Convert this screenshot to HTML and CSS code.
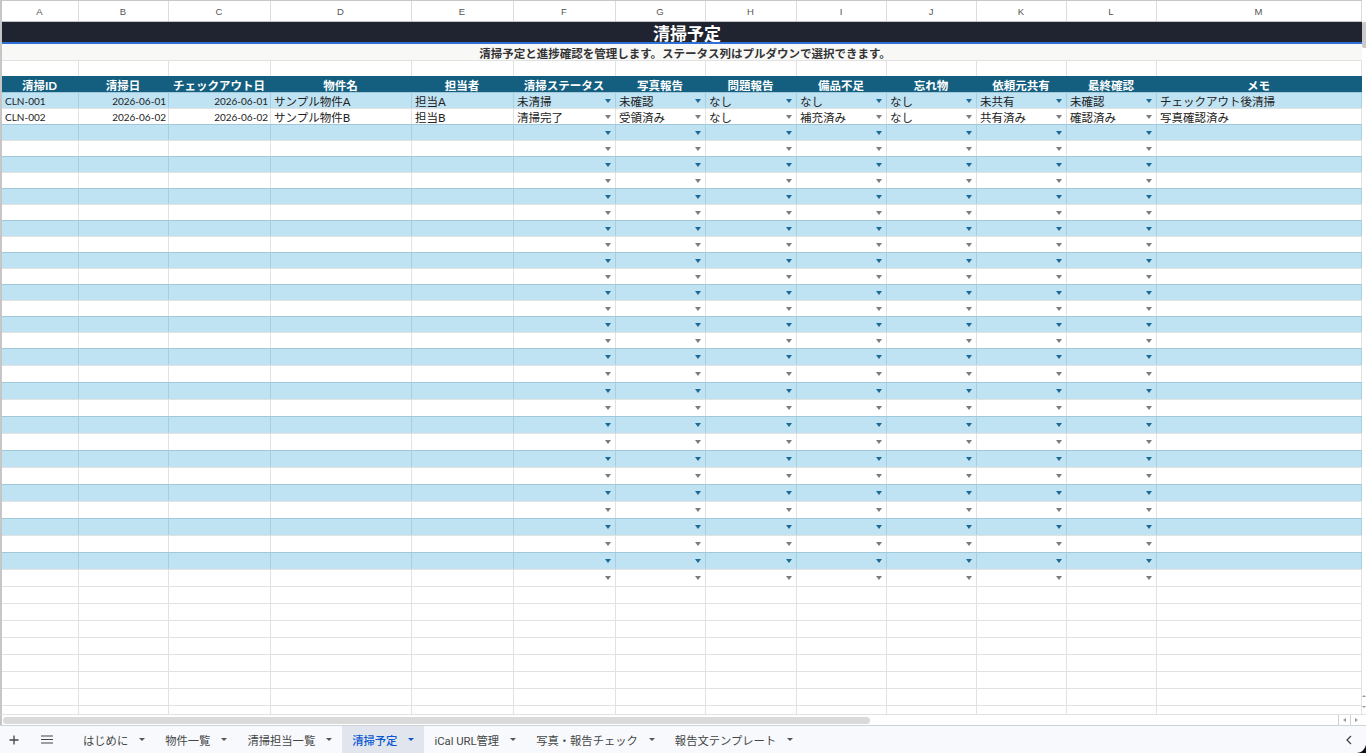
FILE: index.html
```html
<!DOCTYPE html>
<html>
<head>
	<meta charset="utf-8">
	<title>清掃予定</title>
	<link rel="stylesheet" href="styles.css">
</head>
<body>
	<div class="app">
		<!--シート本体-->
		<div class="sheet">
			<div class="grid" id="grid">
				<div class="row letters">
					<div class="c">A</div><div class="c">B</div><div class="c">C</div><div class="c">D</div>
					<div class="c">E</div><div class="c">F</div><div class="c">G</div><div class="c">H</div>
					<div class="c">I</div><div class="c">J</div><div class="c">K</div><div class="c">L</div>
					<div class="c">M</div>
				</div>
				<div class="title">清掃予定</div>
				<div class="subtitle">清掃予定と進捗確認を管理します。ステータス列はプルダウンで選択できます。</div>
				<div class="row" id="blank-row"></div>
				<div class="row head">
					<div class="c">清掃ID</div>
					<div class="c">清掃日</div>
					<div class="c">チェックアウト日</div>
					<div class="c">物件名</div>
					<div class="c">担当者</div>
					<div class="c">清掃ステータス</div>
					<div class="c">写真報告</div>
					<div class="c">問題報告</div>
					<div class="c">備品不足</div>
					<div class="c">忘れ物</div>
					<div class="c">依頼元共有</div>
					<div class="c">最終確認</div>
					<div class="c">メモ</div>
				</div>
				<div class="row band">
					<div class="c lat">CLN-001</div>
					<div class="c lat num">2026-06-01</div>
					<div class="c lat num">2026-06-01</div>
					<div class="c">サンプル物件A</div>
					<div class="c">担当A</div>
					<div class="c sel">未清掃<i class="dd"></i></div>
					<div class="c sel">未確認<i class="dd"></i></div>
					<div class="c sel">なし<i class="dd"></i></div>
					<div class="c sel">なし<i class="dd"></i></div>
					<div class="c sel">なし<i class="dd"></i></div>
					<div class="c sel">未共有<i class="dd"></i></div>
					<div class="c sel">未確認<i class="dd"></i></div>
					<div class="c">チェックアウト後清掃</div>
				</div>
				<div class="row">
					<div class="c lat">CLN-002</div>
					<div class="c lat num">2026-06-02</div>
					<div class="c lat num">2026-06-02</div>
					<div class="c">サンプル物件B</div>
					<div class="c">担当B</div>
					<div class="c sel">清掃完了<i class="dd"></i></div>
					<div class="c sel">受領済み<i class="dd"></i></div>
					<div class="c sel">なし<i class="dd"></i></div>
					<div class="c sel">補充済み<i class="dd"></i></div>
					<div class="c sel">なし<i class="dd"></i></div>
					<div class="c sel">共有済み<i class="dd"></i></div>
					<div class="c sel">確認済み<i class="dd"></i></div>
					<div class="c">写真確認済み</div>
				</div>
				<!--空行はscript.jsで追加-->
			</div>
			<div class="vscroll">
				<div class="vthumb"></div>
				<i class="vbtn up"></i>
				<i class="vbtn down"></i>
			</div>
		</div>

		<!--横スクロール-->
		<div class="hscroll">
			<div class="hthumb"></div>
			<div class="hbtns">
				<span class="hbtn"><i class="tri left"></i></span>
				<span class="hbtn"><i class="tri right"></i></span>
			</div>
		</div>

		<!--シートタブ-->
		<div class="tabs">
			<span class="tool add">
				<svg width="10" height="10" viewBox="0 0 10 10"><path d="M5 0.5v9M0.5 5h9" stroke="#444" stroke-width="1.3" fill="none"/></svg>
			</span>
			<span class="tool menu">
				<svg width="12" height="9" viewBox="0 0 12 9"><path d="M0 1h12M0 4.5h12M0 8h12" stroke="#444" stroke-width="1.2" fill="none"/></svg>
			</span>
			<div class="tab">はじめに<i class="caret"></i></div>
			<div class="tab">物件一覧<i class="caret"></i></div>
			<div class="tab">清掃担当一覧<i class="caret"></i></div>
			<div class="tab active">清掃予定<i class="caret"></i></div>
			<div class="tab">iCal URL管理<i class="caret"></i></div>
			<div class="tab">写真・報告チェック<i class="caret"></i></div>
			<div class="tab">報告文テンプレート<i class="caret"></i></div>
			<span class="back">
				<svg width="6" height="10" viewBox="0 0 6 10"><path d="M5 1L1 5l4 4" stroke="#444" stroke-width="1.3" fill="none"/></svg>
			</span>
			<span class="corner">
				<svg width="9" height="8" viewBox="0 0 9 8"><path d="M9 0V8H0Q7 7 9 0Z" fill="#111"/></svg>
			</span>
		</div>
	</div>
	<script src="script.js"></script>
</body>
</html>
```

FILE: styles.css
```css
* {
	margin: 0;
	padding: 0;
	box-sizing: border-box;
}

body {
	width: 1366px;
	height: 753px;
	overflow: hidden;
	background-color: #fff;
	color: #222;
	font-family: Lato, "Noto Sans CJK JP", sans-serif;
}

.app {
	display: flex;
	flex-direction: column;
	height: 753px;
}

/* シート */
.sheet {
	display: flex;
	flex: 1;
	min-height: 0;
	overflow: hidden;
}

.grid {
	flex: 1;
	overflow: hidden;
	border-left: 2px solid #c6c6c6;
}

.row {
	display: grid;
	grid-template-columns: 77px 90px 102px 141px 102px 102px 90px 91px 90px 90px 90px 90px 205px;
	height: 16px;
}

.row.tall {
	height: 17px;
}

.c {
	display: flex;
	align-items: center;
	overflow: hidden;
	white-space: nowrap;
	padding: 0 4px 0 3px;
	font-size: 11.5px;
	border-top: 1px solid #e2e2e2;
	border-right: 1px solid #e2e2e2;
}

.lat {
	font-size: 10px;
}

.num {
	justify-content: flex-end;
	padding-right: 2px;
}

.dd {
	flex-shrink: 0;
	margin-left: auto;
	width: 0;
	height: 0;
	border-left: 3.5px solid transparent;
	border-right: 3.5px solid transparent;
	border-top: 4px solid #7c7c7c;
}

.band .c {
	background-color: #c0e3f3;
	border-top-color: #9fc8da;
	border-right-color: #a6cfdf;
}

.band .dd {
	border-top-color: #1a6a95;
}

/* 列番号 */
.letters {
	height: 22px;
	border-top: 1px solid #c8c8c8;
	border-bottom: 1px solid #c4c4c4;
}

.letters .c {
	justify-content: center;
	padding-top: 1px;
	border-top: none;
	border-right-color: #dcdcdc;
	color: #555;
	font-family: "Liberation Sans", sans-serif;
	font-size: 9.5px;
}

/* タイトル行 */
.title {
	display: flex;
	align-items: center;
	justify-content: center;
	width: 1360px;
	height: 22px;
	padding-left: 10px;
	background-color: #1f2430;
	border-bottom: 2px solid #2f6fd8;
	color: #fff;
	font-size: 17px;
	font-weight: bold;
}

.subtitle {
	display: flex;
	align-items: center;
	justify-content: center;
	width: 1360px;
	height: 16px;
	padding-left: 6px;
	padding-top: 1px;
	background-color: #f8f8f7;
	color: #333;
	font-size: 11.5px;
	font-weight: bold;
}

.head .c {
	justify-content: center;
	background-color: #145f80;
	border-color: #145f80;
	color: #fff;
	font-weight: bold;
}

/* 縦スクロール */
.vscroll {
	display: flex;
	flex-direction: column;
	align-items: center;
	width: 4px;
	padding-bottom: 6px;
}

.vthumb {
	width: 4px;
	height: 26px;
	margin-top: 22px;
	background-color: #c9c9c9;
	border-radius: 2px 0 0 2px;
}

.vbtn {
	width: 0;
	height: 0;
	border-left: 2px solid transparent;
	border-right: 2px solid transparent;
}

.vbtn.up {
	margin-top: auto;
	margin-bottom: 9px;
	border-bottom: 2px solid #999;
}

.vbtn.down {
	border-top: 2px solid #999;
}

/* 横スクロール */
.hscroll {
	display: flex;
	align-items: center;
	height: 11px;
	padding-left: 1px;
	border-left: 2px solid #c6c6c6;
	border-top: 1px solid #e2e2e2;
}

.hthumb {
	width: 867px;
	height: 7px;
	background-color: #dadada;
	border-radius: 4px;
}

.hbtns {
	display: flex;
	height: 100%;
	margin-left: auto;
	margin-right: 4px;
}

.hbtn {
	display: flex;
	align-items: center;
	justify-content: center;
	width: 12px;
	border-left: 1px solid #d0d0d0;
}

.tri {
	width: 0;
	height: 0;
	border-top: 2.5px solid transparent;
	border-bottom: 2.5px solid transparent;
}

.tri.left {
	border-right: 3px solid #999;
}

.tri.right {
	border-left: 3px solid #999;
}

/* シートタブ */
.tabs {
	display: flex;
	align-items: stretch;
	height: 28px;
	background-color: #f8f9fc;
	border-top: 1px solid #cfd2d6;
	font-family: Roboto, "Noto Sans CJK JP", sans-serif;
	font-size: 11.3px;
	color: #444746;
}

.tool {
	display: flex;
	align-items: center;
	justify-content: center;
}

.add {
	width: 28px;
}

.menu {
	width: 38px;
	margin-right: 7px;
}

.tab {
	display: flex;
	align-items: center;
	gap: 11px;
	padding: 0 10px;
	white-space: nowrap;
}

.caret {
	width: 0;
	height: 0;
	border-left: 3px solid transparent;
	border-right: 3px solid transparent;
	border-top: 3.5px solid #555;
}

.tab.active {
	background-color: #e1e6ee;
	color: #0b57d0;
	font-weight: 500;
}

.tab.active .caret {
	border-top-color: #0b57d0;
}

.back {
	display: flex;
	align-items: center;
	margin-left: auto;
	margin-right: 5px;
}

.corner {
	display: flex;
	align-items: flex-end;
}
```

FILE: script.js
```js
var $$ = function (id) {
	return document.getElementById(id);
}

// 1行分のセルを作る
var makeRow = function (cls, withList) {
	var row = document.createElement("div");
	row.className = "row" + cls;
	for (var i = 0; i < 13; i++) {
		var cell = document.createElement("div");
		cell.className = "c";
		// F〜L列はプルダウン
		if (withList && i >= 5 && i <= 11) {
			var dd = document.createElement("i");
			dd.className = "dd";
			cell.appendChild(dd);
		}
		row.appendChild(cell);
	}
	return row;
}

var fillBlankRow = function () {
	var blank = makeRow("", false);
	while (blank.firstChild) {
		$$("blank-row").appendChild(blank.firstChild);
	}
}

var addRows = function () {
	var grid = $$("grid");
	var cls;
	for (var n = 2; n < 30; n++) {
		cls = (n % 2 == 0 ? " band" : "") + (n >= 16 ? " tall" : "");
		grid.appendChild(makeRow(cls, true));
	}
	for (var m = 0; m < 8; m++) {
		grid.appendChild(makeRow(" tall", false));
	}
}

fillBlankRow();
addRows();
```
